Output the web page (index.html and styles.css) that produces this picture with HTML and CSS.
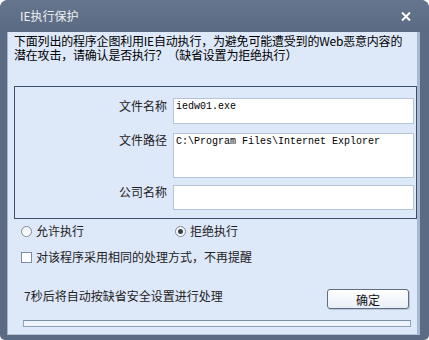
FILE: index.html
```html
<!DOCTYPE html>
<html>
<head>
<meta charset="utf-8">
<link rel="stylesheet" href="styles.css">
</head>
<body>
<div class="window">
  <div class="titlebar">
    <span class="title">IE执行保护</span>
    <svg class="close" width="10" height="9" viewBox="0 0 10 9"><path d="M1 0.5 L9 8.5 M9 0.5 L1 8.5" stroke="#ffffff" stroke-width="2" fill="none"/></svg>
  </div>
  <div class="body">
    <div class="panel">
      <p class="intro">下面列出的程序企图利用IE自动执行，为避免可能遭受到的Web恶意内容的<br>潜在攻击，请确认是否执行？（缺省设置为拒绝执行）</p>
      <div class="group">
        <div class="label">文件名称</div>
        <div class="field f1">iedw01.exe</div>
        <div class="label">文件路径</div>
        <div class="field f2">C:\Program Files\Internet Explorer</div>
        <div class="label l3">公司名称</div>
        <div class="field f3"></div>
      </div>
      <div class="radios">
        <div class="opt first"><span class="radio"></span>允许执行</div>
        <div class="opt"><span class="radio on"></span>拒绝执行</div>
      </div>
      <div class="check"><span class="box"></span>对该程序采用相同的处理方式，不再提醒</div>
      <div class="bottom">
        <span class="countdown">7秒后将自动按缺省安全设置进行处理</span>
        <button class="ok">确定</button>
      </div>
      <div class="progress"></div>
    </div>
  </div>
</div>
</body>
</html>
```

FILE: styles.css
```css
* { box-sizing: border-box; }
body {
  margin: 0;
  background: #ffffff;
  font-family: "Noto Sans CJK SC", "Noto Sans", sans-serif;
  font-size: 12px;
  color: #111;
}
.window {
  width: 429px;
  height: 340px;
  background: #5b6b83;
  border-radius: 8px 8px 5px 5px;
  display: flex;
  flex-direction: column;
  overflow: hidden;
}
.titlebar {
  height: 32px;
  flex: none;
  display: flex;
  align-items: center;
  justify-content: space-between;
  padding: 0 18px 0 20px;
  background: linear-gradient(#65758d, #5a6a82);
  color: #eef0f4;
}
.title { font-size: 12px; line-height: 14px; }
.close { display: block; }
.body {
  flex: 1;
  padding: 0 9px 5px 7px;
  display: flex;
}
.panel {
  flex: 1;
  background: #dde8f9;
  border-left: 1px solid #a7b6cc;
  border-right: 3px solid #a9b8ce;
  border-bottom: 1px solid #b5c2d6;
  padding: 2px 0 0 6px;
  display: flex;
  flex-direction: column;
}
.intro {
  margin: 0;
  line-height: 14px;
  font-size: 12px;
  color: #000;
  letter-spacing: -0.2px;
}
.group {
  margin-top: 24px;
  width: 403px;
  height: 133px;
  border: 1px solid #3d4e6c;
  display: grid;
  grid-template-columns: 1fr 241px;
  grid-template-rows: 26px 45px 25px;
  column-gap: 6px;
  row-gap: 8px;
  padding: 11px 2px 0 0;
  align-content: start;
}
.label {
  text-align: right;
  padding-top: 1px;
  line-height: 14px;
  color: #222;
}
.label.l3 { padding-top: 0; }
.f2 { margin-top: 1px; height: 45px; }
.field {
  background: #ffffff;
  border: 1px solid #b6c4da;
  font-family: "Liberation Mono", "DejaVu Sans Mono", monospace;
  font-size: 10px;
  line-height: 12px;
  padding: 2px 0 0 2px;
  color: #000;
}
.radios {
  display: flex;
  margin-top: 5px;
  height: 14px;
  align-items: center;
  padding-left: 7px;
}
.opt { display: flex; align-items: center; line-height: 14px; color: #222; }
.opt.first { width: 154px; }
.radio {
  width: 11px;
  height: 11px;
  border-radius: 50%;
  border: 1px solid #7c8ba2;
  background: linear-gradient(#f0f2f5, #ffffff);
  margin-right: 4px;
  display: flex;
  align-items: center;
  justify-content: center;
}
.radio.on::after {
  content: "";
  width: 5px;
  height: 5px;
  border-radius: 50%;
  background: #3a3f48;
}
.check {
  display: flex;
  align-items: center;
  margin-top: 12px;
  padding-left: 7px;
  line-height: 14px;
  color: #222;
}
.box {
  width: 11px;
  height: 11px;
  border: 1px solid #7c8ba2;
  background: #ffffff;
  margin-right: 4px;
}
.bottom {
  display: flex;
  justify-content: space-between;
  align-items: flex-start;
  margin-top: 25px;
  padding: 0 8px 0 10px;
}
.countdown { line-height: 14px; color: #222; }
.ok {
  width: 82px;
  height: 20px;
  border: 1px solid #5d6d86;
  border-radius: 3px;
  background: linear-gradient(#ffffff, #e9eef7);
  font-family: "Noto Sans CJK SC", sans-serif;
  font-size: 12px;
  color: #111;
  padding: 0;
  box-shadow: 1px 1px 0 #b9c6da;
}
.progress {
  margin: 11px 0 0 9px;
  width: 388px;
  height: 7px;
  border: 1px solid #90a1bb;
  border-top-color: #7d8ea8;
  background: #edf2fb;
}
```
